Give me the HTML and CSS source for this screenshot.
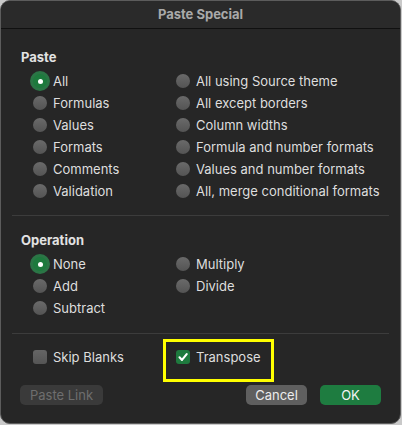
FILE: index.html
```html
<!DOCTYPE html>
<html>
<head>
<meta charset="utf-8">
<link rel="stylesheet" href="styles.css">
</head>
<body>
<div class="window">
  <div class="titlebar">Paste Special</div>
  <div class="content">
    <section class="group paste">
      <h2 class="heading">Paste</h2>
      <div class="options">
        <label class="opt"><span class="radio on"></span>All</label>
        <label class="opt"><span class="radio"></span>All using Source theme</label>
        <label class="opt"><span class="radio"></span>Formulas</label>
        <label class="opt"><span class="radio"></span>All except borders</label>
        <label class="opt"><span class="radio"></span>Values</label>
        <label class="opt"><span class="radio"></span>Column widths</label>
        <label class="opt"><span class="radio"></span>Formats</label>
        <label class="opt"><span class="radio"></span>Formula and number formats</label>
        <label class="opt"><span class="radio"></span>Comments</label>
        <label class="opt"><span class="radio"></span>Values and number formats</label>
        <label class="opt"><span class="radio"></span>Validation</label>
        <label class="opt"><span class="radio"></span>All, merge conditional formats</label>
      </div>
    </section>
    <hr class="sep">
    <section class="group operation">
      <h2 class="heading">Operation</h2>
      <div class="options">
        <label class="opt"><span class="radio on"></span>None</label>
        <label class="opt"><span class="radio"></span>Multiply</label>
        <label class="opt"><span class="radio"></span>Add</label>
        <label class="opt"><span class="radio"></span>Divide</label>
        <label class="opt"><span class="radio"></span>Subtract</label>
      </div>
    </section>
    <hr class="sep">
    <section class="group checks">
      <div class="options">
        <label class="opt"><span class="check"></span>Skip Blanks</label>
        <label class="opt highlight"><span class="check on"><svg viewBox="0 0 14 14" width="14" height="14"><path d="M3.5 7.3 L6 9.9 L10.7 4.1" fill="none" stroke="#fff" stroke-width="2.1" stroke-linecap="round" stroke-linejoin="round"/></svg></span>Transpose</label>
      </div>
    </section>
    <div class="buttons">
      <button class="btn disabled">Paste Link</button>
      <div class="spacer"></div>
      <button class="btn cancel">Cancel</button>
      <button class="btn ok">OK</button>
    </div>
  </div>
</div>
</body>
</html>
```
FILE: styles.css
```css
* { box-sizing: border-box; }
html, body { margin: 0; padding: 0; }
body {
  background: #c9c9c9;
  font-family: Inter, "Liberation Sans", sans-serif;
  font-size: 13px;
  color: #dedede;
  width: 402px;
  height: 425px;
  overflow: hidden;
}
.window {
  width: 401px;
  height: 424px;
  background: #262626;
  border: 1px solid #5c5c5c;
  border-radius: 10px;
  overflow: hidden;
  display: flex;
  flex-direction: column;
}
.titlebar {
  height: 28px;
  line-height: 27px;
  text-align: center;
  font-weight: 700;
  color: #a9a9a9;
  background: #2a2a2a;
  border-bottom: 1px solid #101010;
  flex: none;
}
.content {
  padding: 0 11px;
  display: flex;
  flex-direction: column;
}
.group { padding-left: 9px; }
.paste { padding-top: 20px; padding-bottom: 13px; }
.operation { padding-top: 16px; padding-bottom: 14px; }
.checks { padding-top: 12px; }
.heading {
  margin: 0 0 5px 0;
  font-size: 13px;
  font-weight: 700;
  line-height: 16px;
  color: #e2e2e2;
}
.options {
  display: grid;
  grid-template-columns: 143px auto;
  padding-left: 12px;
}
.opt {
  height: 22px;
  display: flex;
  align-items: center;
  gap: 6px;
  white-space: nowrap;
}
.radio {
  width: 14px;
  height: 14px;
  border-radius: 50%;
  background: linear-gradient(#6a6a6a, #545454);
  flex: none;
  position: relative;
}
.radio.on {
  background: #1d7a3d;
  box-shadow: 0 0 0 3px rgba(46, 160, 88, 0.65);
}
.radio.on::after {
  content: "";
  position: absolute;
  left: 4.5px;
  top: 4.5px;
  width: 5px;
  height: 5px;
  border-radius: 50%;
  background: #fff;
}
.check {
  width: 14px;
  height: 14px;
  border-radius: 3px;
  background: linear-gradient(#656565, #555);
  flex: none;
  display: flex;
}
.check.on { background: #1e7a3e; }
.highlight { position: relative; gap: 6px; }
.highlight::after {
  content: "";
  position: absolute;
  left: -13px;
  top: -7px;
  width: 105px;
  height: 37px;
  border: 3px solid #ffff00;
}
.sep {
  margin: 0;
  border: 0;
  height: 1px;
  background: #3c3c3c;
}
.buttons {
  display: flex;
  align-items: center;
  gap: 13px;
  margin-top: 17px;
  padding-left: 8px;
  padding-right: 8px;
}
.spacer { flex: 1; }
.btn {
  font-family: inherit;
  font-size: 13px;
  height: 20px;
  border: 0;
  border-radius: 5px;
  padding: 0;
  line-height: 20px;
}
.btn.disabled { width: 83px; background: #3a3a3a; color: #6e6e6e; }
.btn.cancel { width: 61px; background: #5f5f5f; color: #ececec; }
.btn.ok { width: 61px; background: #1e7c40; color: #f4f4f4; }
```
